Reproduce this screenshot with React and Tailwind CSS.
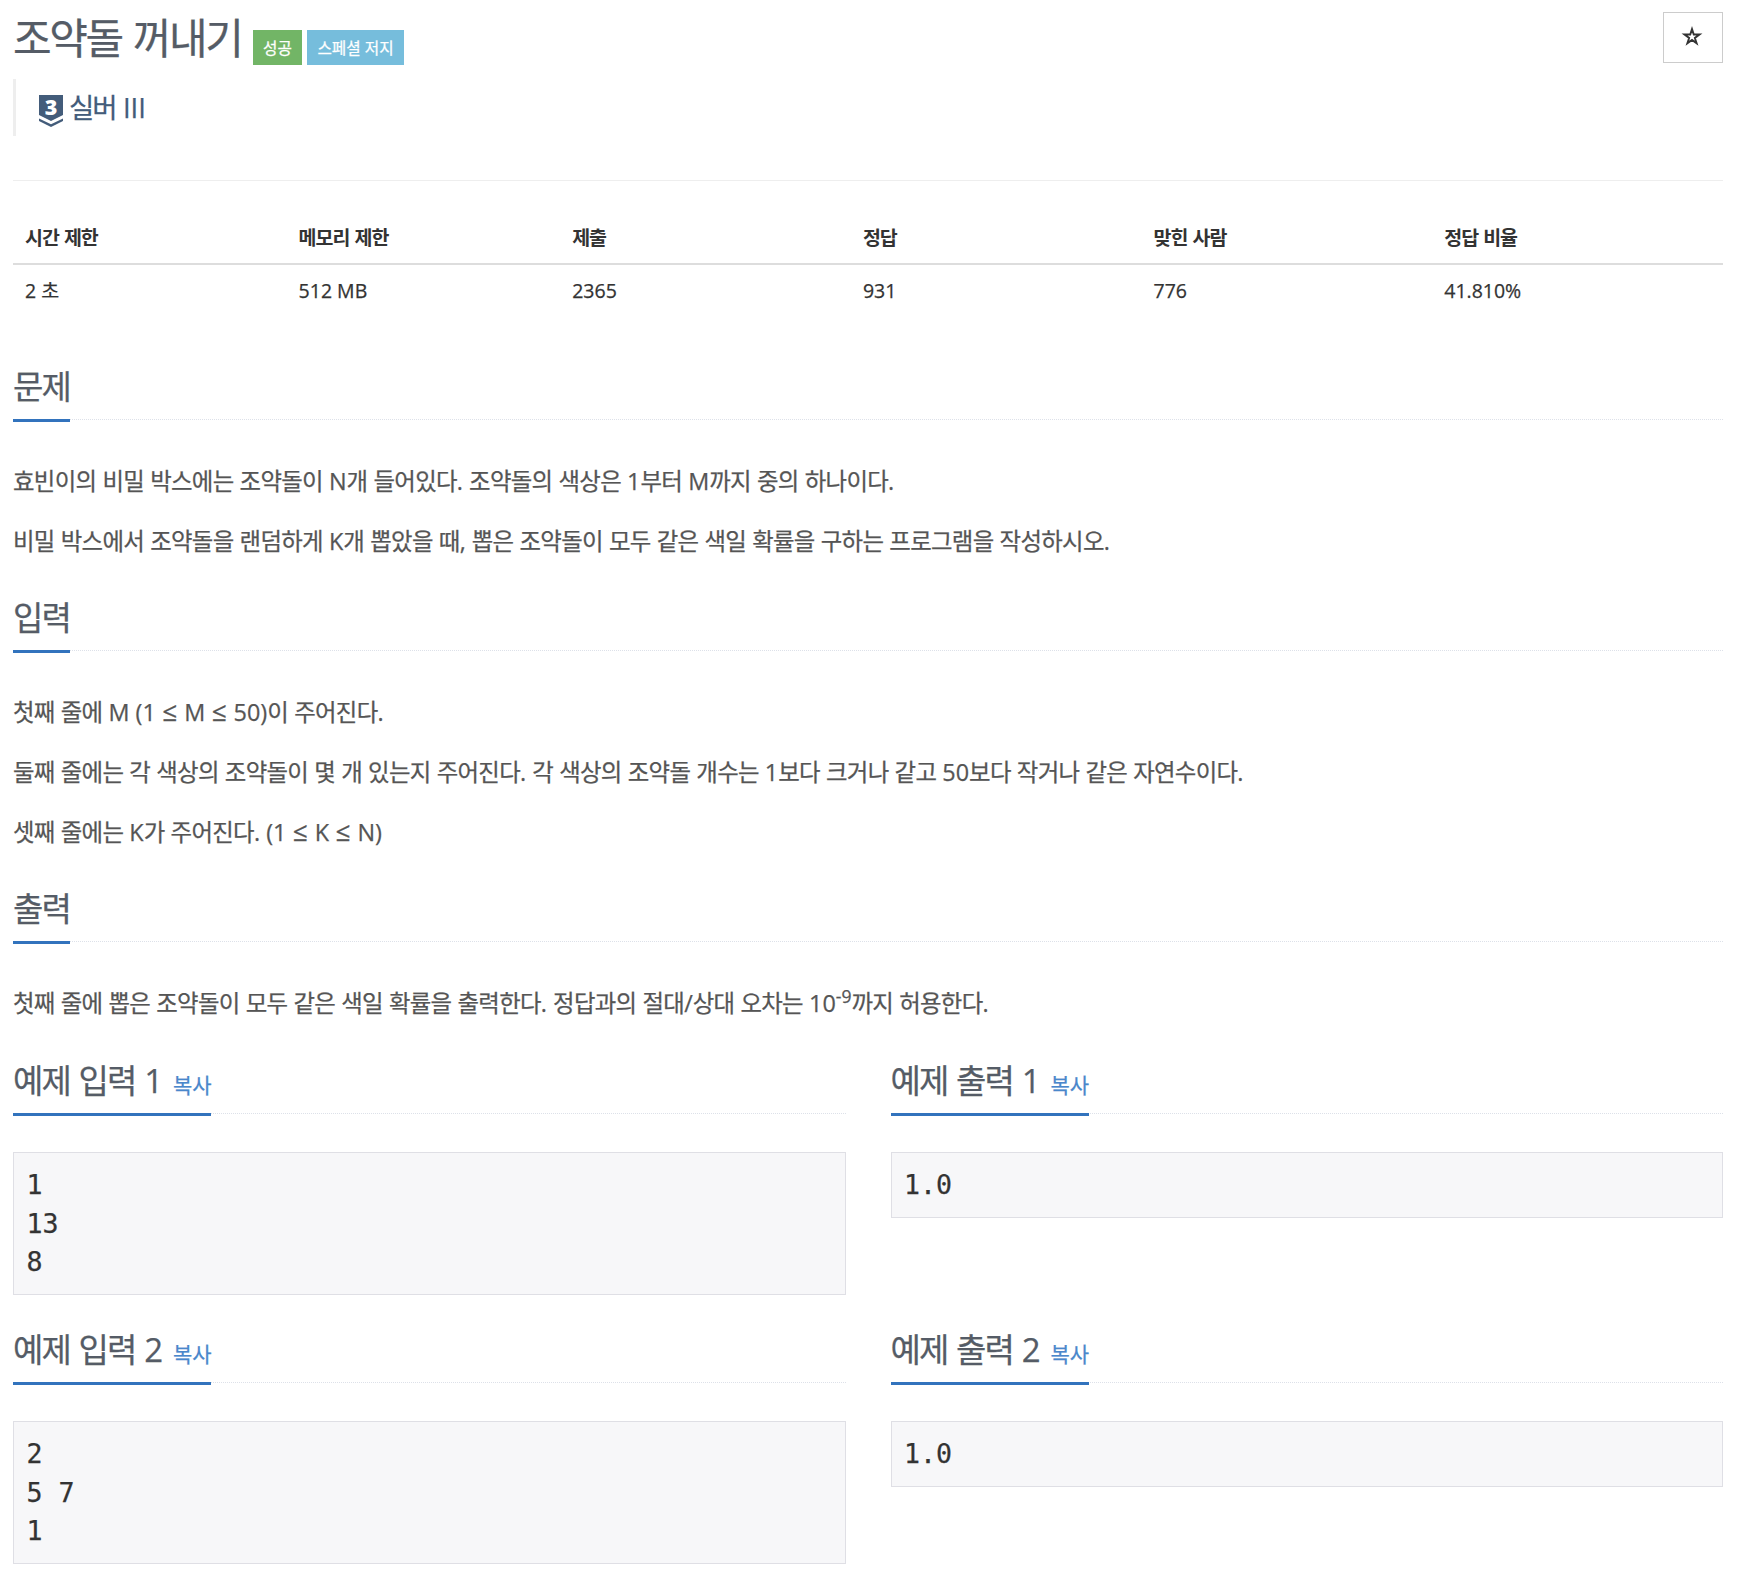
const limits = [
  { label: "시간 제한", value: "2 초", width: "w-[16%]" },
  { label: "메모리 제한", value: "512 MB", width: "w-[16%]" },
  { label: "제출", value: "2365", width: "w-[17%]" },
  { label: "정답", value: "931", width: "w-[17%]" },
  { label: "맞힌 사람", value: "776", width: "w-[17%]" },
  { label: "정답 비율", value: "41.810%", width: "w-[17%]" },
];

const samples = [
  { id: 1, input: "1\n13\n8", output: "1.0" },
  { id: 2, input: "2\n5 7\n1", output: "1.0" },
];

// Tightens only the Hangul runs, latin text keeps its normal spacing
function Ko({ text, tracking = "tracking-[-0.0295em]" }) {
  return text.split(/([가-힣]+|≤)/).map((part, i) => {
    if (part === "≤") {
      return (
        <span key={i} className="px-[0.6px] text-[1.12em] leading-none">
          ≤
        </span>
      );
    }
    if (i % 2 === 0) return part;
    return (
      <span key={i} className={tracking}>
        {part}
      </span>
    );
  });
}

function Headline({ title, copy }) {
  return (
    <div className="flex h-[51px] border-b border-dotted border-[#dde1e9]">
      <h2 className="h-[53px] whitespace-nowrap border-b-3 border-[#3273bd] text-[33px] leading-[36px] text-[#555c66]">
        <Ko text={title} tracking="tracking-[-0.056em]" />
        {copy && (
          <a className="ml-[10px] text-[21px] tracking-[-0.01em] text-[#4a87cb]">복사</a>
        )}
      </h2>
    </div>
  );
}

function Section({ title, children }) {
  return (
    <section className="mb-[39px]">
      <Headline title={title} />
      <div className="mt-[41px] space-y-5 text-[23.4px] leading-10 text-[#555]">
        {children}
      </div>
    </section>
  );
}

function Sample({ title, data }) {
  return (
    <div>
      <Headline title={title} copy />
      <pre className="mt-[38px] border border-[#dfdfe5] bg-[#f7f7f9] px-[12.5px] pt-[13px] pb-[12.5px] font-['DejaVu_Sans_Mono',monospace] text-[26.6px] leading-[38.5px] text-[#333]">
        {data}
      </pre>
    </div>
  );
}

function StarIcon() {
  return (
    <svg width="22" height="22" viewBox="0 0 22 22" fill="none" stroke="#333" strokeWidth="1.9" strokeMiterlimit="10">
      <path d="M11 3.1L12.78 8.56L18.51 8.56L13.87 11.93L15.64 17.39L11 14.02L6.36 17.39L8.13 11.93L3.49 8.56L9.22 8.56Z" />
    </svg>
  );
}

function TierIcon() {
  return (
    <svg width="24" height="32" viewBox="0 0 24 32" fill="#435c7a" className="mt-[6px] overflow-visible">
      <path d="M0 0H24V20L12 26L0 20Z" />
      <path d="M0 23.5L12 29.2L24 23.5V26L12 32L0 26Z" />
      <text
        x="12"
        y="20"
        textAnchor="middle"
        fill="#fff"
        className="font-['Open_Sans',sans-serif] text-[21.5px] font-extrabold"
      >
        3
      </text>
    </svg>
  );
}

export default function App() {
  return (
    <div className="h-[1582px] overflow-hidden bg-white pt-3 pr-[33px] pl-[13px] font-['Open_Sans','Noto_Sans_CJK_KR',sans-serif] text-[#333] [-webkit-text-stroke:0.25px]">
      <header className="flex h-[67px] items-start justify-between">
        <div className="flex">
          <h1 className="w-[230px] text-[42px] leading-[52px] whitespace-nowrap text-[#555c66]">
            <Ko text="조약돌 꺼내기" tracking="tracking-[-0.056em]" />
          </h1>
          <span className="mt-[18px] ml-[10px] flex h-[35px] w-[49px] items-center justify-center bg-[#72b566] pt-[2px] text-[15.7px] text-white">
            성공
          </span>
          <span className="mt-[18px] ml-[5px] flex h-[35px] w-[97px] items-center justify-center bg-[#76bddc] pt-[2px] text-[15.7px] text-white">
            스페셜 저지
          </span>
        </div>
        <button className="flex h-[51px] w-[60px] items-center justify-center border border-[#ccc] pr-[2px] pb-px">
          <StarIcon />
        </button>
      </header>

      <blockquote className="flex h-[57px] items-center gap-[6px] border-l-3 border-[#eee] pl-[23px] text-[27.5px] leading-[57px] text-[#435c7a]">
        <TierIcon />
        <span className="pb-px">
          <Ko text="실버 III" tracking="tracking-[-0.07em]" />
        </span>
      </blockquote>

      <hr className="mt-11 border-[#eee]" />

      <table className="mt-[29px] w-full table-fixed text-left text-[19.5px]">
        <thead>
          <tr className="h-[54px] border-b-2 border-[#ddd]">
            {limits.map((l) => (
              <th key={l.label} className={`${l.width} pt-[2px] pl-3 font-bold [-webkit-text-stroke:0]`}>
                <Ko text={l.label} tracking="tracking-[-0.052em]" />
              </th>
            ))}
          </tr>
        </thead>
        <tbody>
          <tr className="h-[52px]">
            {limits.map((l) => (
              <td key={l.label} className="pl-3">
                <Ko text={l.value} />
              </td>
            ))}
          </tr>
        </tbody>
      </table>

      <main className="mt-[53px]">
        <Section title="문제">
          <p>
            <Ko text="효빈이의 비밀 박스에는 조약돌이 N개 들어있다. 조약돌의 색상은 1부터 M까지 중의 하나이다." />
          </p>
          <p>
            <Ko text="비밀 박스에서 조약돌을 랜덤하게 K개 뽑았을 때, 뽑은 조약돌이 모두 같은 색일 확률을 구하는 프로그램을 작성하시오." />
          </p>
        </Section>
        <Section title="입력">
          <p>
            <Ko text="첫째 줄에 M (1 ≤ M ≤ 50)이 주어진다." />
          </p>
          <p>
            <Ko text="둘째 줄에는 각 색상의 조약돌이 몇 개 있는지 주어진다. 각 색상의 조약돌 개수는 1보다 크거나 같고 50보다 작거나 같은 자연수이다." />
          </p>
          <p>
            <Ko text="셋째 줄에는 K가 주어진다. (1 ≤ K ≤ N)" />
          </p>
        </Section>
        <Section title="출력">
          <p className="pb-px">
            <Ko text="첫째 줄에 뽑은 조약돌이 모두 같은 색일 확률을 출력한다. 정답과의 절대/상대 오차는 10" />
            <sup>-9</sup>
            <Ko text="까지 허용한다." />
          </p>
        </Section>

        {samples.map((s) => (
          <div key={s.id} className="mb-[37px] grid grid-cols-2 items-start gap-[45px]">
            <Sample title={`예제 입력 ${s.id}`} data={s.input} />
            <Sample title={`예제 출력 ${s.id}`} data={s.output} />
          </div>
        ))}
      </main>
    </div>
  );
}
